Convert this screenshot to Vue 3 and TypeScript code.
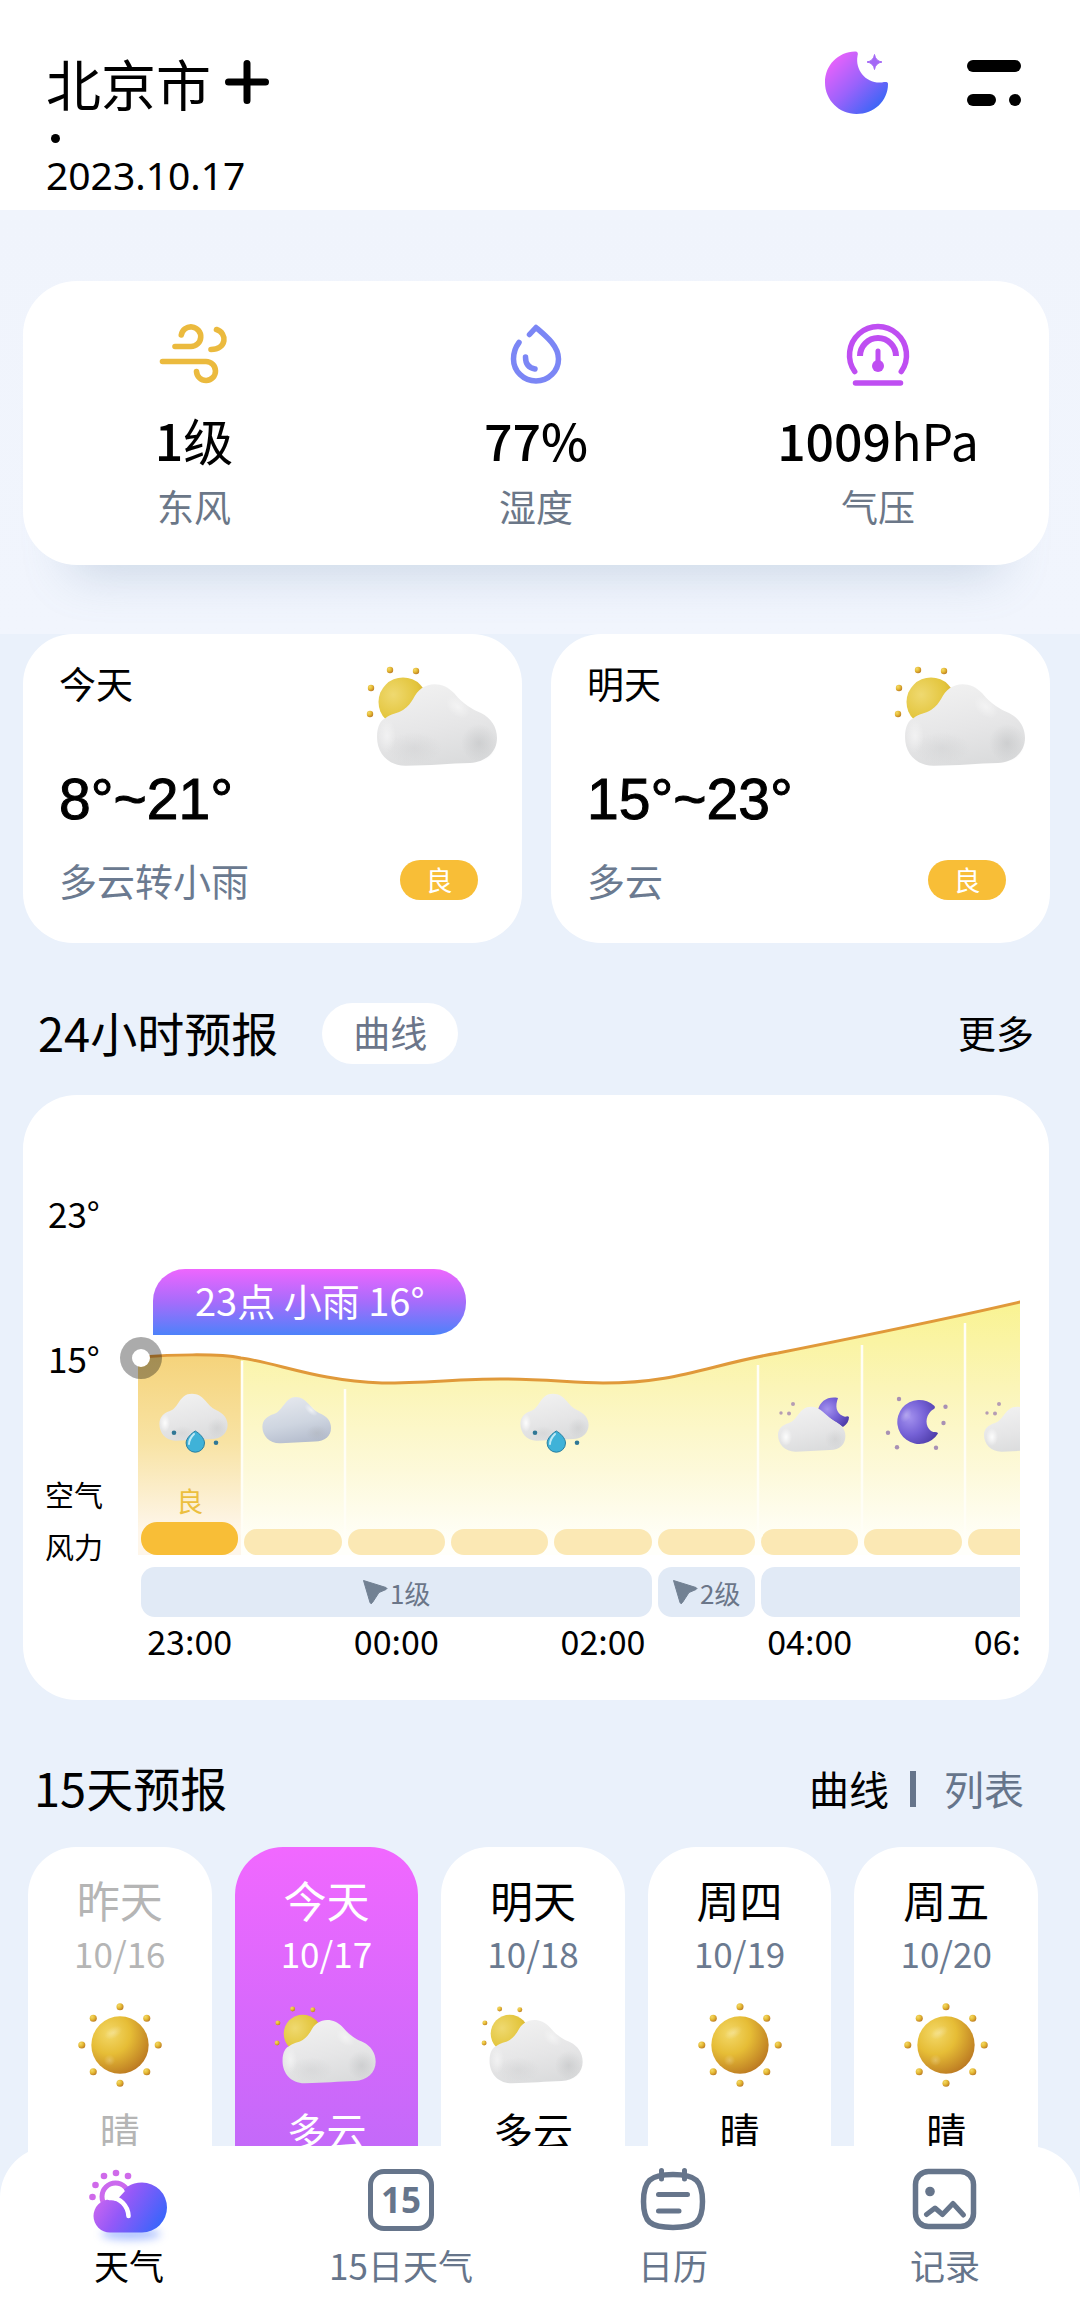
<script setup lang="ts">
import { ref } from 'vue'

interface Metric { icon: string; value: string; unit: string; label: string }
interface Summary { day: string; range: string; text: string; air: string }
interface HourIcon { icon: string; start: number; span: number }
interface Wind { level: string; start: number; span: number }
interface Day { name: string; date: string; icon: 'sun' | 'partly'; text: string; state: string }

const metrics: Metric[] = [
  { icon: 'wind', value: '1', unit: '级', label: '东风' },
  { icon: 'drop', value: '77%', unit: '', label: '湿度' },
  { icon: 'gauge', value: '1009', unit: 'hPa', label: '气压' },
]

const summaries: Summary[] = [
  { day: '今天', range: '8°~21°', text: '多云转小雨', air: '良' },
  { day: '明天', range: '15°~23°', text: '多云', air: '良' },
]

const hourIcons: HourIcon[] = [
  { icon: 'rain', start: 1, span: 1 },
  { icon: 'cloud', start: 2, span: 1 },
  { icon: 'rain', start: 3, span: 4 },
  { icon: 'cloudmoon', start: 7, span: 1 },
  { icon: 'moon', start: 8, span: 1 },
  { icon: 'cloudmoon', start: 9, span: 1 },
]

const winds: Wind[] = [
  { level: '1级', start: 1, span: 5 },
  { level: '2级', start: 6, span: 1 },
  { level: '', start: 7, span: 3 },
]

const times = ['23:00', '00:00', '02:00', '04:00', '06:00']

const days: Day[] = [
  { name: '昨天', date: '10/16', icon: 'sun', text: '晴', state: 'past' },
  { name: '今天', date: '10/17', icon: 'partly', text: '多云', state: 'today' },
  { name: '明天', date: '10/18', icon: 'partly', text: '多云', state: '' },
  { name: '周四', date: '10/19', icon: 'sun', text: '晴', state: '' },
  { name: '周五', date: '10/20', icon: 'sun', text: '晴', state: '' },
]

const sunDots = [[45, 5], [73, 17], [85, 45], [73, 73], [45, 85], [17, 73], [5, 45], [17, 17]]

const view = ref<'curve' | 'list'>('curve')
</script>

<template>
  <div class="page">
    <svg class="sprites" aria-hidden="true">
      <defs>
        <radialGradient id="gSun" cx=".32" cy=".3" r=".8">
          <stop offset="0" stop-color="#f3d868" />
          <stop offset=".45" stop-color="#e6bd36" />
          <stop offset="1" stop-color="#b87420" />
        </radialGradient>
        <radialGradient id="gSunSoft" cx=".3" cy=".35" r=".85">
          <stop offset="0" stop-color="#efd970" />
          <stop offset=".6" stop-color="#e3c53c" />
          <stop offset="1" stop-color="#c99a2c" />
        </radialGradient>
        <linearGradient id="gCloud" x1=".3" y1="0" x2=".62" y2="1">
          <stop offset="0" stop-color="#f1f1f1" />
          <stop offset=".55" stop-color="#e6e6e7" />
          <stop offset="1" stop-color="#dadbdc" />
        </linearGradient>
        <radialGradient id="gShade">
          <stop offset="0" stop-color="#a9abad" stop-opacity=".32" />
          <stop offset="1" stop-color="#a9abad" stop-opacity="0" />
        </radialGradient>
        <radialGradient id="gLight">
          <stop offset="0" stop-color="#ffffff" stop-opacity=".9" />
          <stop offset="1" stop-color="#ffffff" stop-opacity="0" />
        </radialGradient>
        <linearGradient id="gGrey" x1=".4" y1="0" x2=".7" y2="1">
          <stop offset="0" stop-color="#e4e7ed" />
          <stop offset=".55" stop-color="#ced5e0" />
          <stop offset="1" stop-color="#b2bacb" />
        </linearGradient>
        <radialGradient id="gMoon" cx=".3" cy=".4" r=".8">
          <stop offset="0" stop-color="#a391ee" />
          <stop offset=".5" stop-color="#7561d6" />
          <stop offset="1" stop-color="#4b3aa6" />
        </radialGradient>
        <linearGradient id="gBrand" x1=".1" y1=".15" x2=".85" y2=".9">
          <stop offset="0" stop-color="#e762fb" />
          <stop offset=".5" stop-color="#9a62fb" />
          <stop offset="1" stop-color="#3a66f6" />
        </linearGradient>
        <linearGradient id="gNav" gradientUnits="userSpaceOnUse" x1="12" y1="20" x2="76" y2="60">
          <stop offset="0" stop-color="#d468ee" />
          <stop offset=".42" stop-color="#9459f8" />
          <stop offset="1" stop-color="#3566fb" />
        </linearGradient>
        <filter id="soft" x="-30%" y="-80%" width="160%" height="260%">
          <feGaussianBlur stdDeviation="4" />
        </filter>
      </defs>

      <symbol id="partly" viewBox="6 5 134 103">
        <circle cx="30" cy="10" r="3.2" fill="url(#gSun)" />
        <circle cx="56" cy="11" r="3.2" fill="url(#gSun)" />
        <circle cx="11" cy="28" r="3.2" fill="url(#gSun)" />
        <circle cx="10" cy="54" r="3.2" fill="url(#gSun)" />
        <circle cx="43" cy="42" r="24.5" fill="url(#gSunSoft)" />
        <path d="M17 77C17 66 21 60 25 58.500C31 53 37 54 43 50C54 43 53 34 62 28C72 21 86 24 94 33C104 45 112 49 121 53C131 58 137 67 137 78C137 92 126 102 110 103C90 103.500 70 105.500 46 105.700C28 106 17 93 17 77Z" fill="url(#gCloud)" />
        <ellipse cx="119" cy="83" rx="18" ry="19" fill="url(#gShade)" />
        <ellipse cx="54" cy="88" rx="28" ry="16" fill="url(#gShade)" opacity=".5" />
        <ellipse cx="98" cy="47" rx="14" ry="9" transform="rotate(40 98 47)" fill="url(#gLight)" opacity=".5" />
        <ellipse cx="27" cy="76" rx="9" ry="17" fill="url(#gLight)" opacity=".5" />
      </symbol>

      <symbol id="sun" viewBox="0 0 90 90">
        <circle v-for="(d, i) in sunDots" :key="i" :cx="d[0]" :cy="d[1]" r="3.700" fill="url(#gSun)" />
        <circle cx="45" cy="45" r="30" fill="url(#gSun)" />
        <ellipse cx="38" cy="32" rx="10" ry="6" transform="rotate(-30 38 32)" fill="url(#gLight)" opacity=".3" />
        <circle cx="34" cy="61" r="6" fill="url(#gLight)" opacity=".25" />
      </symbol>

      <symbol id="rain" viewBox="0 0 80 64">
        <path d="M9.400 34C9.400 27 14 22.500 20 21C29 18 29 3.700 42 3.700C54 3.700 56 15 66 20C73 23 77.600 28 77.600 35C77.600 43 71 49 62 49L26 50.700C16 51 9.400 43 9.400 34Z" fill="url(#gCloud)" />
        <ellipse cx="67" cy="38" rx="10" ry="10" fill="url(#gShade)" opacity=".7" />
        <ellipse cx="32" cy="43" rx="12" ry="7" fill="url(#gShade)" opacity=".5" />
        <ellipse cx="15" cy="33" rx="5" ry="9" fill="url(#gLight)" />
        <path d="M45.300 41C49 43 54.500 48 54.500 53A9.200 9.200 0 0 1 36.100 53C36.100 48 42 43 45.300 41Z" fill="#3fb2d8" stroke="#2a7fa0" stroke-width="1" />
        <path d="M44 44C41 47 39 50 39 54" fill="none" stroke="#bfeaf6" stroke-width="2" stroke-linecap="round" />
        <circle cx="24" cy="42.700" r="2.300" fill="#2f7796" />
        <circle cx="66" cy="52.700" r="2.300" fill="#2f7796" />
      </symbol>

      <symbol id="cloud" viewBox="0 0 80 64">
        <path d="M9.400 37C9.400 30 14 26 21 24C30 21 32 7 43 7C53 7 57 18 66 23C74 26 78 31 78 38C78 46 72 51.500 62 51.500L28 53.300C17 54 9.400 46 9.400 37Z" fill="url(#gGrey)" />
        <ellipse cx="64" cy="43" rx="11" ry="8" fill="url(#gShade)" />
        <ellipse cx="58" cy="20" rx="8" ry="4" transform="rotate(42 58 20)" fill="url(#gLight)" opacity=".7" />
      </symbol>

      <symbol id="cloudmoon" viewBox="0 0 80 64">
        <path d="M68 8C58 6 50 11 48 20L73 37C77 34 79 31 79 27C77 25 76 28 73 26C66 23 65 16 68 8Z" fill="url(#gMoon)" />
        <path d="M8 45C8 39 12 35 19 33C28 30 29 16.700 41 16.700C51 16.700 55 25 64 31C71 34 75.400 39 75.400 46C75.400 54 70 60 60 60L26 61.700C15 62 8 54 8 45Z" fill="url(#gCloud)" />
        <ellipse cx="65" cy="49" rx="10" ry="10" fill="url(#gShade)" opacity=".6" />
        <ellipse cx="16" cy="47" rx="6" ry="9" fill="url(#gLight)" />
        <g fill="#b59cb4">
          <circle cx="23" cy="14" r="2" />
          <circle cx="11" cy="23" r="1.700" />
          <circle cx="19" cy="23.500" r="2" />
        </g>
      </symbol>

      <symbol id="moon" viewBox="0 0 80 64">
        <path d="M61.500 16A22 22 0 1 0 65 43.500C64 41 61 43 58 41C52 36 52 27 58 21C60 19 63 19 61.500 16Z" fill="url(#gMoon)" />
        <ellipse cx="33" cy="25" rx="5" ry="8" transform="rotate(30 33 25)" fill="url(#gLight)" opacity=".3" />
        <g fill="#a890b4">
          <circle cx="26" cy="9" r="2.200" />
          <circle cx="72.500" cy="16.700" r="2.200" />
          <circle cx="70.500" cy="33" r="2.200" />
          <circle cx="63" cy="57.700" r="2.200" />
          <circle cx="24" cy="57.300" r="2.200" />
          <circle cx="15" cy="42.700" r="2.200" />
        </g>
      </symbol>

      <symbol id="wind" viewBox="0 0 70 64">
        <g fill="none" stroke="#ebba3e" stroke-width="5.600" stroke-linecap="round">
          <path d="M16 24.500H32A9.800 9.800 0 1 0 22.300 13" />
          <path d="M57.500 7.500C68.500 11 68 27.500 52 27.500" />
          <path d="M3.500 39.500H47A9.500 9.500 0 1 1 37.500 49.500" />
        </g>
      </symbol>

      <symbol id="drop" viewBox="0 0 70 64">
        <g fill="none" stroke="#7b86f5" stroke-width="5.500" stroke-linecap="round" stroke-linejoin="round">
          <path d="M28.500 12.500L35 5.500C45 14 57.500 24 57.500 37A22.500 22 0 0 1 12.500 37C12.500 30 15 24.500 18 20.500" />
          <path d="M24.500 35C24.500 42 28 46 34 47" />
        </g>
      </symbol>

      <symbol id="gauge" viewBox="0 0 70 64">
        <g fill="none" stroke="#bf4ef2" stroke-width="5.500" stroke-linecap="round">
          <path d="M11.700 49.500A28.500 28.500 0 1 1 58.300 49.500" />
          <path d="M17 34A18 18 0 0 1 53 34" stroke-linecap="butt" stroke-width="6" />
          <path d="M35 29V42" stroke-width="5" />
          <path d="M12.500 61H57.500" />
        </g>
        <circle cx="35" cy="44" r="6" fill="#bf4ef2" />
      </symbol>
    </svg>

    <header class="top">
      <div class="place">
        <h1 class="city">
          北京市
          <button class="plain" type="button" aria-label="添加城市">
            <svg width="44" height="44" viewBox="0 0 44 44"><path d="M22 3.500V40.500M3.500 22H40.500" stroke="#000" stroke-width="7" stroke-linecap="round" /></svg>
          </button>
        </h1>
        <span class="page-dot"></span>
        <time class="date" datetime="2023-10-17">2023.10.17</time>
      </div>
      <div class="actions">
        <button class="plain" type="button" aria-label="夜间模式">
          <svg width="64" height="64" viewBox="0 0 64 64">
            <path d="M30 .500C32.500 .300 33.500 2 32.500 5C30 19 41 33 57 31.500C61 30.500 63 31 63 33C63 50 49 63 31.500 63C14 63 0 49 0 31.500C0 14 13 1 30 .500Z" fill="url(#gBrand)" />
            <path d="M49.500 3.500Q50.500 10 57 11Q50.500 12 49.500 18.500Q48.500 12 42 11Q48.500 10 49.500 3.500Z" fill="#a468f6" stroke="#a468f6" />
          </svg>
        </button>
        <button class="plain" type="button" aria-label="菜单">
          <svg width="54" height="46" viewBox="0 0 54 46">
            <rect width="54" height="12" rx="6" />
            <rect y="34" width="29" height="12" rx="6" />
            <circle cx="48" cy="40" r="6" />
          </svg>
        </button>
      </div>
    </header>

    <main>
      <section class="band">
        <ul class="metrics">
          <li v-for="m in metrics" :key="m.icon" class="metric">
            <svg width="70" height="64"><use :href="'#' + m.icon" /></svg>
            <strong class="metric-value">{{ m.value }}<span class="metric-unit">{{ m.unit }}</span></strong>
            <span class="metric-label">{{ m.label }}</span>
          </li>
        </ul>
      </section>

      <section class="summaries">
        <article v-for="s in summaries" :key="s.day" class="summary">
          <div class="summary-main">
            <h2 class="summary-day">{{ s.day }}</h2>
            <p class="summary-range">{{ s.range }}</p>
            <p class="summary-text">{{ s.text }}</p>
          </div>
          <div class="summary-side">
            <svg width="134" height="103"><use href="#partly" /></svg>
            <span class="badge">{{ s.air }}</span>
          </div>
        </article>
      </section>

      <section>
        <div class="section-head">
          <h2 class="section-title">24小时预报</h2>
          <button class="pill" type="button">曲线</button>
          <a class="more" href="#more">更多</a>
        </div>

        <div class="chart">
          <div class="axis">
            <span class="axis-temp">23°</span>
            <span class="axis-temp">15°</span>
            <span class="axis-row">空气</span>
            <span class="axis-row">风力</span>
          </div>
          <div class="plot">
            <div class="scroller">
              <div class="track">
                <div class="stage">
                  <svg class="curve" viewBox="0 0 930 260" width="930" height="260" aria-hidden="true">
                    <defs>
                      <linearGradient id="area" gradientUnits="userSpaceOnUse" x1="0" y1="5" x2="0" y2="250">
                        <stop offset="0" stop-color="#f9f391" />
                        <stop offset=".36" stop-color="#fbf5b8" />
                        <stop offset=".7" stop-color="#fdf9da" />
                        <stop offset="1" stop-color="#fffffa" />
                      </linearGradient>
                      <linearGradient id="areaNow" gradientUnits="userSpaceOnUse" x1="0" y1="60" x2="0" y2="235">
                        <stop offset="0" stop-color="#f5d37b" />
                        <stop offset=".5" stop-color="#f8e3a4" />
                        <stop offset="1" stop-color="#fef6ea" />
                      </linearGradient>
                      <clipPath id="under">
                        <path d="M0 62C30 60 80 58 103 63C140 68 180 86 244 88C290 88 320 84 362 84C400 84 430 87 465 88C540 88 570 70 640 58C720 42 800 26 882 7L930 -4V260H0Z" />
                      </clipPath>
                    </defs>
                    <g clip-path="url(#under)">
                      <rect width="930" height="260" fill="url(#area)" />
                      <rect width="103" height="260" fill="url(#areaNow)" />
                      <path d="M104 66V240M207 94V240M620 70V240M724 50V240M827 28V240" stroke="#fffef6" stroke-width="2.500" />
                    </g>
                    <path d="M3 62C30 60 80 58 103 63C140 68 180 86 244 88C290 88 320 84 362 84C400 84 430 87 465 88C540 88 570 70 640 58C720 42 800 26 882 7L930 -4" fill="none" stroke="#e0993a" stroke-width="3" />
                  </svg>
                  <div class="grid icons">
                    <svg
                      v-for="h in hourIcons"
                      :key="h.start"
                      width="80"
                      height="64"
                      :style="{ gridColumn: h.start + ' / span ' + h.span }"
                    ><use :href="'#' + h.icon" /></svg>
                  </div>
                  <div class="grid air">
                    <div v-for="n in 9" :key="n" class="air-cell">
                      <span v-if="n === 1" class="air-text">良</span>
                      <i class="bar" :class="{ now: n === 1 }"></i>
                    </div>
                  </div>
                </div>
                <div class="grid winds">
                  <div v-for="w in winds" :key="w.start" class="wind" :style="{ gridColumn: w.start + ' / span ' + w.span }">
                    <template v-if="w.level">
                      <svg width="26" height="26" viewBox="0 0 26 26"><path d="M1.500 1.500L24 8.500Q26 9.500 24 10.500L17 13.500L10.500 23.500Q9 26 8 23.500Z" fill="#728193" stroke="#728193" stroke-linejoin="round" /></svg>
                      {{ w.level }}
                    </template>
                  </div>
                </div>
                <div class="grid times">
                  <time v-for="(t, i) in times" :key="t" :style="{ gridColumn: i * 2 + 1 }">{{ t }}</time>
                </div>
              </div>
            </div>
            <div class="tip">23点 小雨 16°</div>
            <i class="handle"></i>
          </div>
        </div>
      </section>

      <section>
        <div class="section-head days-head">
          <h2 class="section-title">15天预报</h2>
          <div class="switch">
            <button type="button" class="plain switch-item" :class="{ on: view === 'curve' }" @click="view = 'curve'">曲线</button>
            <i class="switch-bar"></i>
            <button type="button" class="plain switch-item" :class="{ on: view === 'list' }" @click="view = 'list'">列表</button>
          </div>
        </div>
        <ul class="days">
          <li v-for="d in days" :key="d.date" class="day" :class="d.state">
            <strong class="day-name">{{ d.name }}</strong>
            <span class="day-date">{{ d.date }}</span>
            <svg :width="d.icon === 'sun' ? 86 : 104" height="90"><use :href="'#' + d.icon" /></svg>
            <span class="day-text">{{ d.text }}</span>
          </li>
        </ul>
      </section>
    </main>

    <nav class="tabs">
      <a class="tab active" href="#weather">
        <svg width="88" height="68" viewBox="0 -2 88 68" overflow="visible">
          <ellipse cx="46" cy="66" rx="30" ry="6" fill="#5f86ff" opacity=".5" filter="url(#soft)" />
          <g fill="#cf6aea">
            <circle cx="43" cy="8" r="3.300" /><circle cx="31" cy="5" r="3.300" /><circle cx="19" cy="8" r="3.300" />
            <circle cx="10.500" cy="17" r="3.300" /><circle cx="7.500" cy="29" r="3.300" />
          </g>
          <circle cx="30.500" cy="28.500" r="13.500" fill="#fff" stroke="#cb69ee" stroke-width="5" />
          <path d="M57 14.500A25 25 0 0 1 57 64.500H25A16.500 16.500 0 0 1 25 31.500Q30 31.500 33 30C38 20 46 14.500 57 14.500Z" fill="url(#gNav)" />
          <path d="M24.500 30C35 29 43 38 43.500 48" fill="none" stroke="#fff" stroke-width="4.600" stroke-linecap="round" />
          <path d="M22 29.500Q21 20 30 19Q37 19 40 23L34 29.500L31 33Z" fill="#fff" />
        </svg>
        天气
      </a>
      <a class="tab" href="#forecast">
        <span class="num-icon">15</span>
        15日天气
      </a>
      <a class="tab" href="#calendar">
        <svg width="68" height="68" viewBox="0 0 68 68" fill="none" stroke="#66758b" stroke-width="5.500" stroke-linecap="round">
          <path d="M34 8.500C57 8.500 63.500 15 63.500 35.500S57 61.500 34 61.500S4.500 56 4.500 35.500S11 8.500 34 8.500Z" />
          <path d="M22.500 4.500V13M45.500 4.500V13M19.500 28.500H48.500M19.500 45H40" stroke-width="5" />
        </svg>
        日历
      </a>
      <a class="tab" href="#records">
        <svg width="68" height="68" viewBox="0 0 68 68" fill="none" stroke="#66758b" stroke-width="5.500" stroke-linecap="round">
          <rect x="4.500" y="5.500" width="58" height="55" rx="13" />
          <circle cx="19" cy="25.500" r="4.800" fill="#66758b" stroke="none" />
          <path d="M15.500 48.500L24 42L31.500 48.500L42 37.500L52.500 49" stroke-linejoin="round" stroke-width="5" />
        </svg>
        记录
      </a>
    </nav>
  </div>
</template>

<style>
body {
  margin: 0;
  background: #eaf1fb;
}
</style>

<style scoped>
.page {
  display: flex;
  flex-direction: column;
  min-height: 100vh;
  background: #eaf1fb;
  color: #000;
  font-family: "Noto Sans CJK SC", "Noto Sans", sans-serif;
}
h1, h2, p, ul {
  margin: 0;
  padding: 0;
  font-weight: 400;
  list-style: none;
}
svg {
  display: block;
  flex: none;
}
a {
  color: inherit;
  text-decoration: none;
}
button {
  margin: 0;
  border: 0;
  font: inherit;
  color: inherit;
  cursor: pointer;
}
.plain {
  padding: 0;
  background: none;
}
.sprites {
  position: absolute;
  width: 0;
  height: 0;
}

.top {
  display: flex;
  justify-content: space-between;
  align-items: flex-start;
  padding: 51px 59px 15px 46px;
  background: #fff;
}
.place {
  display: flex;
  flex-direction: column;
}
.city {
  display: flex;
  align-items: center;
  gap: 14px;
  font-size: 55px;
  line-height: 62px;
}
.page-dot {
  width: 9px;
  height: 9px;
  margin: 21px 0 12px 5px;
  border-radius: 50%;
  background: #000;
}
.date {
  font-family: "Noto Sans", sans-serif;
  font-size: 39px;
  line-height: 40px;
}
.actions {
  display: flex;
  align-items: center;
  gap: 78px;
}

.band {
  padding: 71px 31px 69px 23px;
  background: linear-gradient(#f0f4fc, #f1f5fd);
}
.metrics {
  display: grid;
  grid-template-columns: repeat(3, 1fr);
  padding: 41px 0 37px;
  border-radius: 54px;
  background: #fff;
  box-shadow: 0 56px 48px -48px rgba(120, 150, 180, .32);
}
.metric {
  display: flex;
  flex-direction: column;
  align-items: center;
}
.metric-value {
  margin: 23px 0 15px;
  font-size: 50px;
  font-weight: 500;
  line-height: 60px;
}
.metric-unit {
  font-weight: 400;
}
.metric-label {
  font-size: 37px;
  line-height: 44px;
  color: #6b7788;
}

.summaries {
  display: grid;
  grid-template-columns: 1fr 1fr;
  gap: 29px;
  padding: 0 30px 0 23px;
}
.summary {
  display: flex;
  justify-content: space-between;
  padding: 27px 22px 41px 36px;
  border-radius: 50px;
  background: #fff;
}
.summary-day {
  font-size: 37px;
  line-height: 44px;
}
.summary-range {
  margin: 62px 0 27px;
  font-family: "Liberation Sans", Arial, sans-serif;
  font-size: 57px;
  line-height: 64px;
  -webkit-text-stroke: 1px #000;
}
.summary-text {
  font-size: 38px;
  line-height: 44px;
  color: #6b7a90;
}
.summary-side {
  display: flex;
  flex-direction: column;
  align-items: flex-end;
  justify-content: space-between;
  padding-top: 4px;
}
.badge {
  width: 78px;
  margin: 0 22px 2px 0;
  border-radius: 20px;
  background: #f8be37;
  color: #fff;
  font-size: 27px;
  line-height: 40px;
  text-align: center;
}

.section-head {
  display: flex;
  align-items: center;
  padding: 60px 46px 31px 38px;
}
.section-title {
  padding-bottom: 4px;
  font-size: 47px;
  line-height: 56px;
}
.pill {
  margin-left: 44px;
  padding: 0 31px 3px;
  border-radius: 31px;
  background: #fff;
  color: #6b7589;
  font-size: 37px;
  line-height: 58px;
}
.more {
  margin-left: auto;
  padding-bottom: 3px;
  font-size: 38px;
  line-height: 58px;
}

.chart {
  display: flex;
  margin: 0 31px 0 23px;
  padding-bottom: 30px;
  border-radius: 54px;
  background: #fff;
}
.axis {
  display: flex;
  flex-direction: column;
  flex: none;
  width: 93px;
  padding: 98px 0 0 22px;
}
.axis-temp {
  height: 40px;
  margin: 0 0 105px 3px;
  font-size: 35px;
  line-height: 40px;
}
.axis-temp + .axis-temp {
  margin-bottom: 101px;
}
.axis-row {
  margin-bottom: 22px;
  font-size: 29px;
  line-height: 30px;
}
.plot {
  position: relative;
  flex: 1;
  min-width: 0;
  margin-right: 29px;
}
.scroller {
  overflow: hidden;
  padding-bottom: 12px;
}
.track {
  width: 930px;
}
.grid {
  display: grid;
  grid-template-columns: repeat(9, 1fr);
}
.stage {
  position: relative;
  margin-top: 200px;
  padding-top: 95px;
}
.curve {
  position: absolute;
  top: 0;
  left: 0;
  overflow: visible;
}
.icons {
  position: relative;
  justify-items: center;
}
.air {
  position: relative;
  height: 101px;
}
.air-cell {
  display: flex;
  flex-direction: column;
  justify-content: flex-end;
  padding: 0 3px;
}
.air-text {
  margin-bottom: 6px;
  color: #ecbf3f;
  font-size: 27px;
  line-height: 30px;
  text-align: center;
}
.bar {
  height: 26px;
  border-radius: 13px;
  background: #fbe8b4;
}
.bar.now {
  height: 33px;
  border-radius: 16px;
  background: #f8be37;
}
.winds {
  margin: 12px 0 7px;
}
.wind {
  display: flex;
  align-items: center;
  justify-content: center;
  gap: 2px;
  height: 50px;
  margin: 0 3px;
  border-radius: 14px;
  background: #e1eaf6;
  color: #6b7689;
  font-size: 26px;
}
.times {
  font-size: 34px;
  line-height: 34px;
  text-align: center;
}
.tip {
  position: absolute;
  top: 174px;
  left: 15px;
  box-sizing: border-box;
  height: 66px;
  padding: 0 42px;
  border-radius: 32px 32px 32px 0;
  background: linear-gradient(#ee66fe, #a66cfb 50%, #4d82fa);
  color: #fff;
  font-size: 38px;
  line-height: 62px;
  white-space: nowrap;
}
.handle {
  position: absolute;
  top: 242px;
  left: -18px;
  width: 18px;
  height: 18px;
  border: 12px solid rgba(0, 0, 0, .33);
  border-radius: 50%;
  background: #fff;
  background-clip: padding-box;
}

.days-head {
  justify-content: space-between;
  padding: 59px 56px 28px 34px;
}
.switch {
  display: flex;
  align-items: center;
}
.switch-item {
  padding-bottom: 3px;
  color: #66758b;
  font-size: 40px;
  line-height: 44px;
}
.switch-item.on {
  color: #000;
}
.switch-bar {
  width: 6px;
  height: 36px;
  margin: 0 28px 0 21px;
  background: #66758b;
}
.days {
  display: grid;
  grid-template-columns: repeat(5, 1fr);
  gap: 23px;
  padding: 0 42px 0 28px;
}
.day {
  display: flex;
  flex-direction: column;
  align-items: center;
  padding: 30px 0 60px;
  border-radius: 48px;
  background: #fff;
}
.day-name {
  font-size: 43px;
  font-weight: 400;
  line-height: 44px;
}
.day-date {
  margin: 12px 0 27px;
  color: #6b7a90;
  font-size: 35px;
  line-height: 40px;
}
.day-text {
  margin-top: 18px;
  font-size: 40px;
  line-height: 44px;
}
.day.past,
.day.past .day-date {
  color: #b5b5b5;
}
.day.today {
  background: linear-gradient(#f168ff, #c269f9 85%);
}
.day.today,
.day.today .day-date {
  color: #fff;
}

.tabs {
  position: relative;
  display: flex;
  flex: 1;
  justify-content: space-between;
  align-items: flex-start;
  margin-top: -66px;
  padding: 20px 62px 23px 56px;
  border-radius: 52px 52px 0 0;
  background: #fff;
}
.tab {
  display: flex;
  flex-direction: column;
  align-items: center;
  gap: 11px;
  width: 146px;
  color: #66758b;
  font-size: 35px;
  line-height: 40px;
  white-space: nowrap;
}
.tab.active {
  color: #000;
}
.num-icon {
  box-sizing: border-box;
  width: 66px;
  height: 62px;
  margin: 3px 0;
  border: 5px solid #66758b;
  border-radius: 16px;
  font-family: "Open Sans", sans-serif;
  font-size: 35px;
  font-weight: 700;
  line-height: 52px;
  text-align: center;
}
</style>
